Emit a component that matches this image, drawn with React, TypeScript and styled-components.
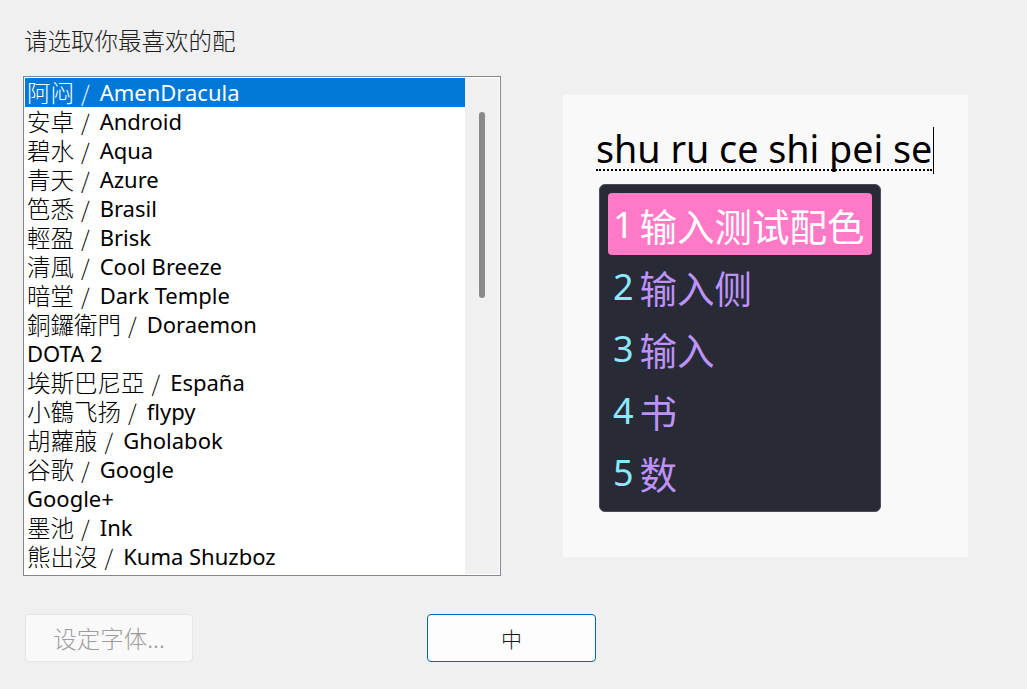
import React from "react";
import styled, { createGlobalStyle } from "styled-components";

const Global = createGlobalStyle`
  html, body { margin: 0; padding: 0; background: #f0f0f0; }
  body { font-family: "Noto Sans", "Noto Sans CJK SC", sans-serif; }
`;

const Page = styled.div`
  width: 1027px;
  height: 689px;
  box-sizing: border-box;
  background: #f0f0f0;
  padding: 24px 0 0 23px;
  display: flex;
  flex-direction: column;
  overflow: hidden;
`;

const Title = styled.div`
  font-family: "Noto Sans CJK SC", sans-serif;
  font-size: 23.5px;
  font-weight: 300;
  line-height: 32px;
  color: #1e1e1e;
  padding-left: 1px;
  height: 32px;
`;

const Main = styled.div`
  margin-top: 20px;
  display: flex;
  align-items: flex-start;
  gap: 62px;
`;

const ListBox = styled.div`
  width: 478px;
  height: 500px;
  box-sizing: border-box;
  border: 1px solid #828790;
  padding: 1px;
  background: #fff;
  display: flex;
`;

const Rows = styled.div`
  width: 440px;
  overflow: hidden;
  display: flex;
  flex-direction: column;
`;

const Row = styled.div<{ $selected?: boolean }>`
  height: 29px;
  line-height: 29px;
  padding-left: 2px;
  white-space: nowrap;
  display: flex;
  align-items: center;
  background: ${(p) => (p.$selected ? "#0078d7" : "transparent")};
  color: ${(p) => (p.$selected ? "#fff" : "#000")};
`;

const Zh = styled.span`
  font-family: "Noto Sans CJK SC", sans-serif;
  font-size: 23.5px;
  line-height: 29px;
  font-weight: 300;
`;

const Sep = styled.span`
  font-family: "Noto Sans CJK SC", sans-serif;
  font-size: 22px;
  line-height: 29px;
  font-weight: 300;
  padding: 0 10px 0 7px;
`;

const En = styled.span`
  font-family: "Noto Sans", sans-serif;
  font-size: 22px;
  line-height: 29px;
`;

const Track = styled.div`
  width: 34px;
  background: #f0f0f0;
  display: flex;
  justify-content: center;
  align-items: flex-start;
`;

const Thumb = styled.div`
  margin-top: 34px;
  width: 6px;
  height: 186px;
  border-radius: 3px;
  background: #8a8a8a;
`;

const Preview = styled.div`
  margin-top: 19px;
  width: 405px;
  height: 462px;
  background: #f9f9f9;
  box-sizing: border-box;
  padding: 32px 0 0 33px;
  display: flex;
  flex-direction: column;
  align-items: flex-start;
`;

const Preedit = styled.div`
  display: flex;
  align-items: flex-start;
  height: 47px;
`;

const PreeditText = styled.span`
  font-family: "Noto Sans", sans-serif;
  font-size: 37.7px;
  line-height: 40px;
  color: #000;
  margin-top: 2px;
  border-bottom: 2px dotted #000;
`;

const Caret = styled.span`
  width: 1px;
  height: 47px;
  background: #000;
  margin-left: 1px;
`;

const CandBox = styled.div`
  margin-top: 10px;
  margin-left: 3px;
  width: 282px;
  height: 328px;
  box-sizing: border-box;
  background: #282a36;
  border: 1px solid #4a4c58;
  border-radius: 6px;
  padding: 8px;
  display: flex;
  flex-direction: column;
`;

const Cand = styled.div<{ $hl?: boolean }>`
  height: 62px;
  display: flex;
  align-items: center;
  padding-left: 5px;
  border-radius: 4px;
  background: ${(p) => (p.$hl ? "#ff79c6" : "transparent")};
  white-space: nowrap;
`;

const Num = styled.span<{ $hl?: boolean }>`
  font-family: "Noto Sans", sans-serif;
  font-size: 36px;
  color: ${(p) => (p.$hl ? "#fff" : "#8be9fd")};
  margin-right: 6px;
`;

const CandText = styled.span<{ $hl?: boolean }>`
  font-family: "Noto Sans CJK SC", sans-serif;
  font-size: 37.5px;
  color: ${(p) => (p.$hl ? "#fff" : "#bd93f9")};
`;

const Footer = styled.div`
  margin-top: 38px;
  padding-left: 2px;
  display: flex;
  gap: 234px;
`;

const Button = styled.button<{ $primary?: boolean }>`
  width: ${(p) => (p.$primary ? 169 : 168)}px;
  height: 48px;
  box-sizing: border-box;
  border-radius: 4px;
  border: 1px solid ${(p) => (p.$primary ? "#0067c0" : "#e5e5e5")};
  background: ${(p) => (p.$primary ? "#fdfdfd" : "#f9f9f9")};
  color: ${(p) => (p.$primary ? "#1a1a1a" : "#9d9d9d")};
  font-family: "Noto Sans CJK SC", sans-serif;
  font-size: ${(p) => (p.$primary ? 21 : 23.5)}px;
  font-weight: 300;
  padding: 0;
  display: flex;
  align-items: center;
  justify-content: center;
`;

const items: [string | null, string][] = [
  ["阿闷", "AmenDracula"],
  ["安卓", "Android"],
  ["碧水", "Aqua"],
  ["青天", "Azure"],
  ["笆悉", "Brasil"],
  ["輕盈", "Brisk"],
  ["清風", "Cool Breeze"],
  ["暗堂", "Dark Temple"],
  ["銅鑼衛門", "Doraemon"],
  [null, "DOTA 2"],
  ["埃斯巴尼亞", "España"],
  ["小鶴飞扬", "flypy"],
  ["胡蘿菔", "Gholabok"],
  ["谷歌", "Google"],
  [null, "Google+"],
  ["墨池", "Ink"],
  ["熊出沒", "Kuma Shuzboz"],
];

const cands = ["输入测试配色", "输入侧", "输入", "书", "数"];

export default function App() {
  return (
    <>
      <Global />
      <Page>
        <Title>请选取你最喜欢的配</Title>
        <Main>
          <ListBox>
            <Rows>
              {items.map(([zh, en], i) => (
                <Row key={i} $selected={i === 0}>
                  {zh && (
                    <>
                      <Zh>{zh}</Zh>
                      <Sep>/</Sep>
                    </>
                  )}
                  <En>{en}</En>
                </Row>
              ))}
            </Rows>
            <Track>
              <Thumb />
            </Track>
          </ListBox>
          <Preview>
            <Preedit>
              <PreeditText>shu ru ce shi pei se</PreeditText>
              <Caret />
            </Preedit>
            <CandBox>
              {cands.map((c, i) => (
                <Cand key={i} $hl={i === 0}>
                  <Num $hl={i === 0}>{i + 1}</Num>
                  <CandText $hl={i === 0}>{c}</CandText>
                </Cand>
              ))}
            </CandBox>
          </Preview>
        </Main>
        <Footer>
          <Button disabled>设定字体...</Button>
          <Button $primary>中</Button>
        </Footer>
      </Page>
    </>
  );
}
